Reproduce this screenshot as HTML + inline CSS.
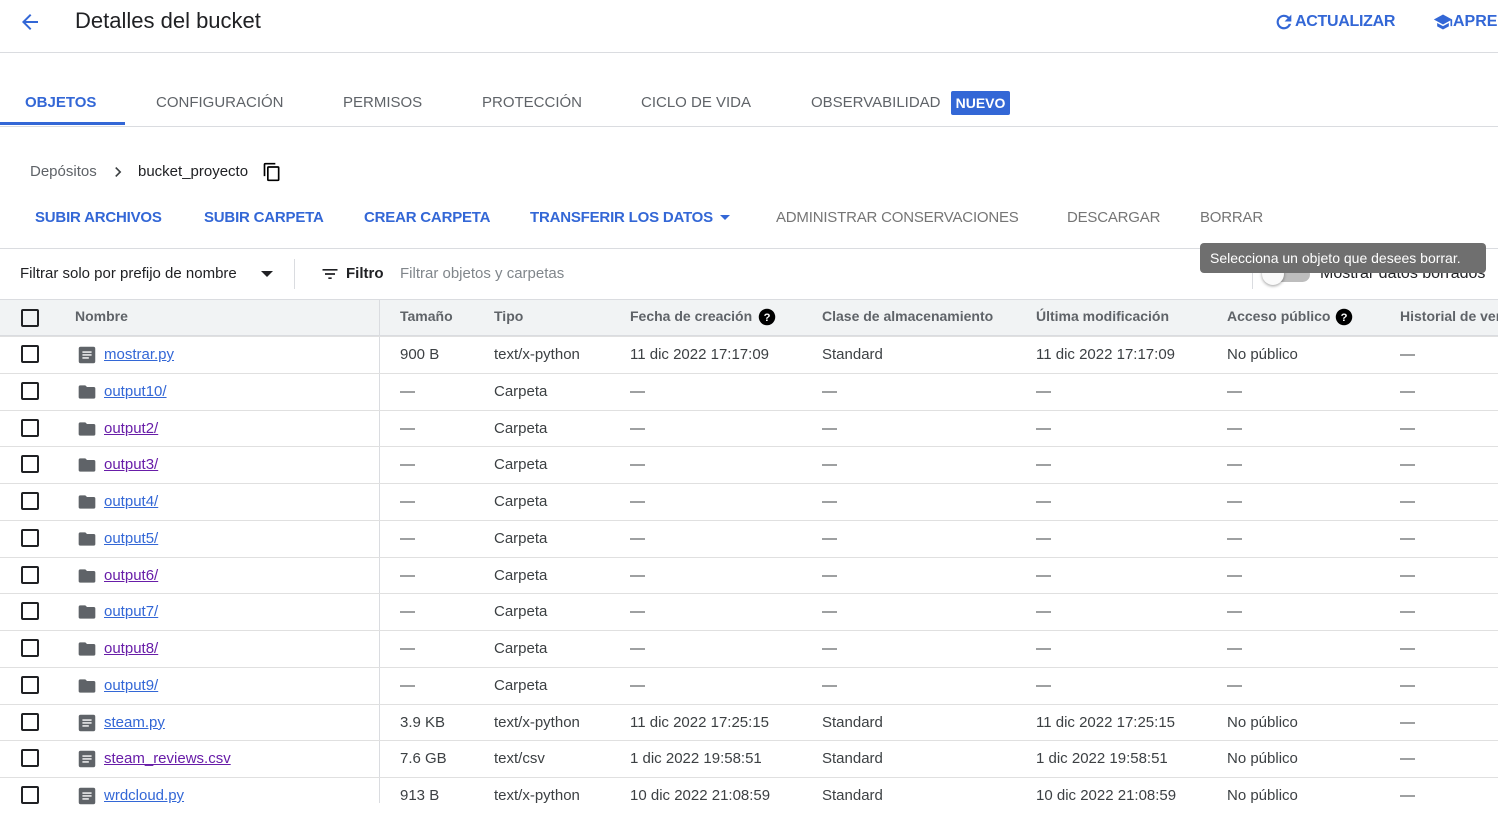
<!DOCTYPE html><html><head><meta charset="utf-8"><style>
*{margin:0;padding:0;box-sizing:border-box}
body{width:1498px;height:803px;overflow:hidden;background:#fff;font-family:"Liberation Sans",Arial,sans-serif;position:relative;color:#202124}
.a{position:absolute;white-space:nowrap}
.hl{position:absolute;left:0;width:1498px;height:1px;background:#dadce0}
.tab{font-size:15px;color:#5f6368;top:94px}
.btn{font-size:15px;top:209px;color:#3367d6;font-weight:bold;letter-spacing:-0.2px}
.btn.g{color:#757575}
.cb{position:absolute;left:21px;width:18px;height:18px;border:2px solid #202124;border-radius:2px}
.row{position:absolute;left:0;width:1498px;height:37px;border-top:1px solid #e0e0e0;font-size:15px;color:#3c4043}
.row span{position:absolute;top:9px;white-space:nowrap}
.row .n{left:104px;text-decoration:underline;color:#3367d6}
.row .n.v{color:#681da8}
.th{position:absolute;top:308px;font-size:14px;font-weight:bold;color:#5f6368;white-space:nowrap}
</style></head><body>
<svg class="a" style="left:18px;top:10px" width="24" height="24" viewBox="0 0 24 24"><path d="M20 11H7.8l5.6-5.6L12 4l-8 8 8 8 1.4-1.4L7.8 13H20z" fill="#3367d6"/></svg>
<div class="a" style="left:75px;top:8px;font-size:22px;color:#202124">Detalles del bucket</div>
<svg class="a" style="left:1273px;top:11px" width="22" height="22" viewBox="0 0 24 24"><path d="M17.6 6.4A8 8 0 1 0 19.7 14h-2.6a5.6 5.6 0 1 1-1.2-5.9L12.6 11.4H20V4z" fill="#3367d6"/></svg>
<div class="a" style="left:1295px;top:13px;font-size:16px;font-weight:bold;color:#3367d6;letter-spacing:-0.3px">ACTUALIZAR</div>
<svg class="a" style="left:1432px;top:12px" width="22" height="20" viewBox="0 0 24 24"><path d="M5 13.2v4L12 21l7-3.8v-4L12 17zM12 3 1 9l11 6 9-4.9V17h2V9z" fill="#3367d6"/></svg>
<div class="a" style="left:1453px;top:13px;font-size:16px;font-weight:bold;color:#3367d6">APREN</div>
<div class="hl" style="top:52px"></div>
<div class="a tab" style="left:25px;color:#3367d6;font-weight:bold">OBJETOS</div>
<div class="a" style="left:0;top:122px;width:125px;height:3px;background:#3367d6"></div>
<div class="a tab" style="left:156px">CONFIGURACIÓN</div>
<div class="a tab" style="left:343px">PERMISOS</div>
<div class="a tab" style="left:482px">PROTECCIÓN</div>
<div class="a tab" style="left:641px">CICLO DE VIDA</div>
<div class="a tab" style="left:811px">OBSERVABILIDAD</div>
<div class="a" style="left:951px;top:91px;width:59px;height:24px;background:#3367d6;border-radius:2px;color:#fff;font-size:14px;font-weight:bold;text-align:center;line-height:24px">NUEVO</div>
<div class="hl" style="top:126px"></div>
<div class="a" style="left:30px;top:163px;font-size:15px;color:#5f6368">Depósitos</div>
<svg class="a" style="left:108px;top:162px" width="20" height="20" viewBox="0 0 24 24"><path d="M8.6 16.6 13.2 12 8.6 7.4 10 6l6 6-6 6z" fill="#3c4043"/></svg>
<div class="a" style="left:138px;top:163px;font-size:15px;color:#202124">bucket_proyecto</div>
<svg class="a" style="left:262px;top:162px" width="20" height="20" viewBox="0 0 24 24"><path d="M16 1H4a2 2 0 0 0-2 2v14h2V3h12zm3 4H8a2 2 0 0 0-2 2v14a2 2 0 0 0 2 2h11a2 2 0 0 0 2-2V7a2 2 0 0 0-2-2zm0 16H8V7h11z" fill="#000"/></svg>
<div class="a btn" style="left:35px">SUBIR ARCHIVOS</div>
<div class="a btn" style="left:204px">SUBIR CARPETA</div>
<div class="a btn" style="left:364px">CREAR CARPETA</div>
<div class="a btn" style="left:530px">TRANSFERIR LOS DATOS</div>
<div class="a" style="left:720px;top:215px;border-left:5px solid transparent;border-right:5px solid transparent;border-top:5px solid #3367d6"></div>
<div class="a btn g" style="left:776px;font-weight:normal">ADMINISTRAR CONSERVACIONES</div>
<div class="a btn g" style="left:1067px;font-weight:normal">DESCARGAR</div>
<div class="a btn g" style="left:1200px;font-weight:normal">BORRAR</div>
<div class="hl" style="top:248px"></div>
<div class="a" style="left:20px;top:265px;font-size:15px">Filtrar solo por prefijo de nombre</div>
<div class="a" style="left:261px;top:271px;border-left:6px solid transparent;border-right:6px solid transparent;border-top:6px solid #202124"></div>
<div class="a" style="left:294px;top:259px;width:1px;height:30px;background:#dadce0"></div>
<svg class="a" style="left:320px;top:264px" width="20" height="20" viewBox="0 0 24 24"><path d="M3 6h18v2H3zm3 5h12v2H6zm4 5h4v2h-4z" fill="#202124"/></svg>
<div class="a" style="left:346px;top:265px;font-size:15px;font-weight:bold">Filtro</div>
<div class="a" style="left:400px;top:265px;font-size:15px;color:#80868b">Filtrar objetos y carpetas</div>
<div class="a" style="left:1252px;top:259px;width:1px;height:30px;background:#dadce0"></div>
<div class="a" style="left:1266px;top:267px;width:44px;height:15px;border-radius:8px;background:#bdbdbd"></div>
<div class="a" style="left:1262px;top:263px;width:22px;height:22px;border-radius:50%;background:#fafafa;box-shadow:0 1px 3px rgba(0,0,0,.4)"></div>
<div class="a" style="left:1320px;top:265px;font-size:16px">Mostrar datos borrados</div>
<div class="a" style="left:1200px;top:243px;width:286px;height:30px;background:#6f6f6f;border-radius:4px;color:#fff;font-size:14px;line-height:30px;padding-left:10px">Selecciona un objeto que desees borrar.</div>
<div class="a" style="left:0;top:299px;width:1498px;height:37px;background:#f1f3f4;border-top:1px solid #dadce0;border-bottom:1px solid #dadce0"></div>
<div class="cb" style="top:309px"></div>
<div class="th" style="left:75px">Nombre</div>
<div class="th" style="left:400px">Tamaño</div>
<div class="th" style="left:494px">Tipo</div>
<div class="th" style="left:630px">Fecha de creación</div>
<svg class="a" style="left:758px;top:308px" width="18" height="18" viewBox="0 0 24 24"><circle cx="12" cy="12" r="11" fill="#000"/><text x="12" y="17.5" font-size="15" font-weight="bold" fill="#fff" text-anchor="middle" font-family="Liberation Sans">?</text></svg>
<div class="th" style="left:822px">Clase de almacenamiento</div>
<div class="th" style="left:1036px">Última modificación</div>
<div class="th" style="left:1227px">Acceso público</div>
<svg class="a" style="left:1335px;top:308px" width="18" height="18" viewBox="0 0 24 24"><circle cx="12" cy="12" r="11" fill="#000"/><text x="12" y="17.5" font-size="15" font-weight="bold" fill="#fff" text-anchor="middle" font-family="Liberation Sans">?</text></svg>
<div class="th" style="left:1400px">Historial de ver</div>
<div class="a" style="left:379px;top:299px;width:1px;height:504px;background:#dadce0"></div>
<div id="rows"></div>
<script>
var F='<svg style="position:absolute;left:76px;top:8px" width="22" height="20" viewBox="0 0 24 24"><path d="M10 4H4a2 2 0 0 0-2 2v12a2 2 0 0 0 2 2h16a2 2 0 0 0 2-2V8a2 2 0 0 0-2-2h-8z" fill="#5f6368"/></svg>';
var D='<svg style="position:absolute;left:76px;top:7px" width="22" height="22" viewBox="0 0 24 24"><rect x="3" y="3" width="18" height="18" rx="2" fill="#5f6368"/><path d="M7 8h10v1.5H7zm0 3.2h10v1.5H7zm0 3.2h7v1.5H7z" fill="#fff"/></svg>';
var R=[["mostrar.py",0,0,"900 B","text/x-python","11 dic 2022 17:17:09","Standard","11 dic 2022 17:17:09","No público"],
["output10/",1,0],["output2/",1,1],["output3/",1,1],["output4/",1,0],["output5/",1,0],["output6/",1,1],["output7/",1,0],["output8/",1,1],["output9/",1,0],
["steam.py",0,0,"3.9 KB","text/x-python","11 dic 2022 17:25:15","Standard","11 dic 2022 17:25:15","No público"],
["steam_reviews.csv",0,1,"7.6 GB","text/csv","1 dic 2022 19:58:51","Standard","1 dic 2022 19:58:51","No público"],
["wrdcloud.py",0,0,"913 B","text/x-python","10 dic 2022 21:08:59","Standard","10 dic 2022 21:08:59","No público"]];
var h='',X=[400,494,630,822,1036,1227];
R.forEach(function(r,i){var t=336+i*36.75;var v=r[1]?["—","Carpeta","—","—","—","—"]:r.slice(3);
h+='<div class="row" style="top:'+t+'px"><div class="cb" style="top:8px"></div>'+(r[1]?F:D)+'<span class="n'+(r[2]?' v':'')+'">'+r[0]+'</span>';
v.forEach(function(s,j){h+='<span style="left:'+X[j]+'px">'+s+'</span>'});h+='<span style="left:1400px">—</span></div>';});
document.getElementById('rows').innerHTML=h;
</script>
</body></html>
